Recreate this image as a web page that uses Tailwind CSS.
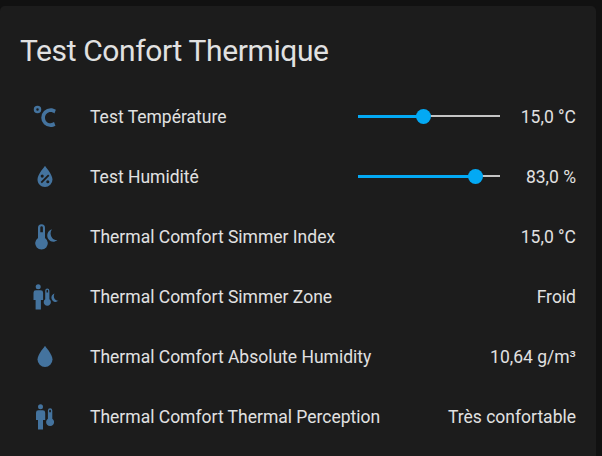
<!DOCTYPE html>
<html lang="fr">
<head>
    <meta charset="UTF-8">
    <meta name="viewport" content="width=device-width, initial-scale=1.0">
    <title>Test Confort Thermique</title>
    <script src="https://cdn.jsdelivr.net/npm/@tailwindcss/browser@4"></script>
</head>

<body class="bg-[#111111] h-screen overflow-hidden pt-1.5 font-['Roboto',sans-serif] text-[#e1e1e1]">
    <div class="w-[596px] h-[460px] bg-[#1c1c1c] rounded-[5px] px-5">
        <h1 class="h-[81px] pt-[15px] text-[30px] leading-[60px] tracking-[-0.38px]">Test Confort Thermique</h1>

        <div class="flex flex-col text-[17.5px] leading-[60px]">

            <!-- Temperature -->
            <div class="flex items-center h-[60px]">
                <div class="w-[50px] h-[30px] mr-5 flex justify-center">
                    <svg class="w-[30px] h-[30px] fill-[#44739e]" viewBox="0 0 24 24"><path d="M16.5,5C18.05,5 19.5,5.47 20.69,6.28L19.53,9.17C18.73,8.44 17.67,8 16.5,8C14,8 12,10 12,12.5C12,15 14,17 16.5,17C17.53,17 18.47,16.66 19.23,16.08L20.37,18.93C19.24,19.61 17.92,20 16.5,20A7.5,7.5 0 0,1 9,12.5A7.5,7.5 0 0,1 16.5,5M6,3A3,3 0 0,1 9,6A3,3 0 0,1 6,9A3,3 0 0,1 3,6A3,3 0 0,1 6,3M6,5A1,1 0 0,0 5,6A1,1 0 0,0 6,7A1,1 0 0,0 7,6A1,1 0 0,0 6,5Z"/></svg>
                </div>
                <span class="grow">Test Température</span>
                <svg class="w-[158px] h-[15px] mb-[2px]" viewBox="0 0 158 15">
                    <rect x="8" y="6" width="142" height="2" fill="#c4c4c4"/>
                    <rect x="8" y="6" width="65" height="3" fill="#03a9f4"/>
                    <circle cx="73.5" cy="7.5" r="7.5" fill="#03a9f4"/>
                </svg>
                <span class="w-[68px] text-right">15,0 °C</span>
            </div>

            <!-- Humidity -->
            <div class="flex items-center h-[60px]">
                <div class="w-[50px] h-[30px] mr-5 flex justify-center">
                    <svg class="w-[30px] h-[30px] fill-[#44739e]" viewBox="0 0 24 24"><path fill-rule="evenodd" d="M12,3.25C12,3.25 6,10 6,14C6,17.32 8.69,20 12,20A6,6 0 0,0 18,14C18,10 12,3.25 12,3.25M14.47,9.97L15.53,11.03L9.53,17.03L8.47,15.97M9.75,10A1.25,1.25 0 0,1 11,11.25A1.25,1.25 0 0,1 9.75,12.5A1.25,1.25 0 0,1 8.5,11.25A1.25,1.25 0 0,1 9.75,10M14.25,14.5A1.25,1.25 0 0,1 15.5,15.75A1.25,1.25 0 0,1 14.25,17A1.25,1.25 0 0,1 13,15.75A1.25,1.25 0 0,1 14.25,14.5Z"/></svg>
                </div>
                <span class="grow">Test Humidité</span>
                <svg class="w-[158px] h-[15px] mb-[2px]" viewBox="0 0 158 15">
                    <rect x="8" y="6" width="142" height="2" fill="#c4c4c4"/>
                    <rect x="8" y="6" width="117" height="3" fill="#03a9f4"/>
                    <circle cx="125.5" cy="7.5" r="7.5" fill="#03a9f4"/>
                </svg>
                <span class="w-[68px] text-right">83,0 %</span>
            </div>

            <!-- Simmer index -->
            <div class="flex items-center h-[60px]">
                <div class="w-[50px] h-[30px] mr-5 flex justify-center">
                    <svg class="w-[30px] h-[30px] fill-[#44739e]" viewBox="0 0 30 30">
                        <path fill-rule="evenodd" d="M8 16V5.7a3.5 3.5 0 0 1 7 0V16a6.3 6.3 0 1 1-7 0zM10.3 5.6v4.7h2.6V5.6a1.3 1.3 0 0 0-2.6 0z"/>
                        <path d="M21.9 7.3C20 10.2 20.2 13.6 22.2 16C23.5 17.5 25.2 18.2 27.3 18C24.7 20.6 20.9 20.3 18.7 17.6C16 14.2 17.2 8.9 21.9 7.3z"/>
                    </svg>
                </div>
                <span class="grow">Thermal Comfort Simmer Index</span>
                <span>15,0 °C</span>
            </div>

            <!-- Simmer zone -->
            <div class="flex items-center h-[60px]">
                <div class="w-[50px] h-[30px] mr-5 flex justify-center">
                    <svg class="w-[30px] h-[30px] fill-[#44739e]" viewBox="0 0 30 30">
                        <circle cx="8.2" cy="4.7" r="2.5"/>
                        <path d="M5.9 8.3h4.8a2.4 2.4 0 0 1 2.4 2.4V18h-2.2v9.5H5.6V18H3.5v-7.3a2.4 2.4 0 0 1 2.4-2.4z"/>
                        <path fill-rule="evenodd" d="M15.2 17.2V8.7a2.1 2.1 0 0 1 4.2 0v8.5a3.6 3.6 0 1 1-4.2 0zM16.5 8.5v2h1.6v-2a.8.8 0 0 0-1.6 0z"/>
                        <path d="M24.5 11.6C23.4 13.7 23.7 15.7 24.9 17.2C25.8 18.3 27 18.8 28.4 18.6C26.7 20.4 24.1 20.3 22.5 18.4C20.6 16.1 21.3 12.8 24.5 11.6z"/>
                    </svg>
                </div>
                <span class="grow">Thermal Comfort Simmer Zone</span>
                <span>Froid</span>
            </div>

            <!-- Absolute humidity -->
            <div class="flex items-center h-[60px]">
                <div class="w-[50px] h-[30px] mr-5 flex justify-center">
                    <svg class="w-[30px] h-[30px] fill-[#44739e]" viewBox="0 0 24 24"><path d="M12,20A6,6 0 0,1 6,14C6,10 12,3.25 12,3.25C12,3.25 18,10 18,14A6,6 0 0,1 12,20Z"/></svg>
                </div>
                <span class="grow">Thermal Comfort Absolute Humidity</span>
                <span>10,64 g/m³</span>
            </div>

            <!-- Thermal perception -->
            <div class="flex items-center h-[60px]">
                <div class="w-[50px] h-[30px] mr-5 flex justify-center">
                    <svg class="w-[30px] h-[30px] fill-[#44739e]" viewBox="0 0 30 30">
                        <circle cx="10.5" cy="4.7" r="2.5"/>
                        <path d="M8.4 8.3h4.4a2.4 2.4 0 0 1 2.4 2.4V18H13v9.500H8V18H6v-7.3a2.4 2.4 0 0 1 2.400-2.400z"/>
                        <path fill-rule="evenodd" d="M17.9 16.7V8.5a2.200 2.200 0 0 1 4.400 0v8.200a4 4 0 1 1-4.400 0zM19.200 8.500v1.800h1.700V8.500a.85.85 0 0 0-1.700 0z"/>
                    </svg>
                </div>
                <span class="grow">Thermal Comfort Thermal Perception</span>
                <span>Très confortable</span>
            </div>

        </div>
    </div>
</body>
</html>
